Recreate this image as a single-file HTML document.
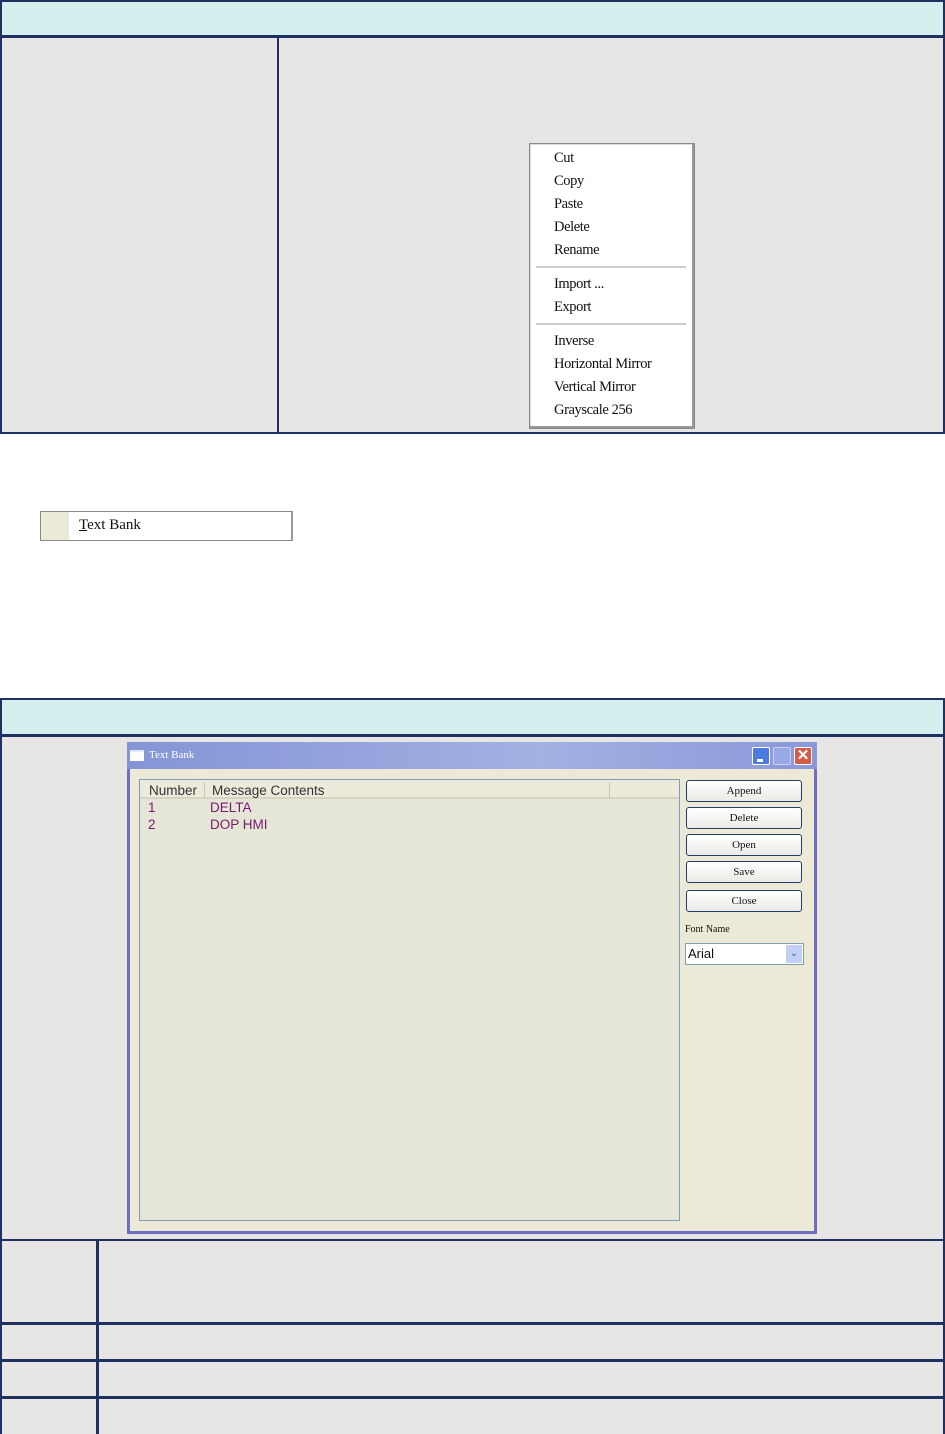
<!DOCTYPE html>
<html><head><style>
*{margin:0;padding:0;box-sizing:border-box}
body{width:945px;height:1434px;background:#fff;position:relative;overflow:hidden;font-family:"Liberation Serif",serif}
.a{position:absolute}
.nv{background:#1f3160}
.cy{background:#d3f0ef}
.gr{background:#e7e6e5}
.mi{position:absolute;left:24px;font-size:14.5px;color:#111;letter-spacing:-0.4px}
.btn{position:absolute;left:686px;width:116px;height:22px;border:1px solid #1f3f6a;border-radius:3px;background:linear-gradient(#fff,#ecebe6);font-size:11px;text-align:center;line-height:20px;color:#111}
.ls{font-family:"Liberation Sans",sans-serif}
</style></head><body>
<div class="a nv" style="left:0;top:0;width:945px;height:434px"></div>
<div class="a cy" style="left:2px;top:2px;width:941px;height:33px"></div>
<div class="a gr" style="left:2px;top:38px;width:275px;height:394px"></div>
<div class="a gr" style="left:279px;top:38px;width:664px;height:394px"></div>
<div class="a" style="left:529px;top:143px;width:166px;height:286px;background:#fff;border:1px solid #888;box-shadow:inset -2px -2px 0 #999,inset 1px 1px 0 #ddd">
 <div class="mi" style="top:6px">Cut</div>
 <div class="mi" style="top:29px">Copy</div>
 <div class="mi" style="top:52px">Paste</div>
 <div class="mi" style="top:75px">Delete</div>
 <div class="mi" style="top:98px">Rename</div>
 <div class="a" style="left:6px;top:122px;width:150px;height:2px;background:#ccc"></div>
 <div class="mi" style="top:132px">Import ...</div>
 <div class="mi" style="top:155px">Export</div>
 <div class="a" style="left:6px;top:179px;width:150px;height:2px;background:#ccc"></div>
 <div class="mi" style="top:189px">Inverse</div>
 <div class="mi" style="top:212px">Horizontal Mirror</div>
 <div class="mi" style="top:235px">Vertical Mirror</div>
 <div class="mi" style="top:258px">Grayscale 256</div>
</div>
<div class="a" style="left:40px;top:511px;width:253px;height:30px;border:1px solid #888;border-right:2px solid #999;background:#fff">
 <div class="a" style="left:0;top:0;width:28px;height:28px;background:#ecead8"></div>
 <div class="a" style="left:38px;top:5px;font-size:15px;color:#111"><u>T</u>ext Bank</div>
</div>
<div class="a nv" style="left:0;top:698px;width:945px;height:736px"></div>
<div class="a cy" style="left:2px;top:700px;width:941px;height:34px"></div>
<div class="a gr" style="left:2px;top:737px;width:941px;height:502px"></div>
<div class="a gr" style="left:2px;top:1241px;width:94px;height:81px"></div>
<div class="a gr" style="left:99px;top:1241px;width:844px;height:81px"></div>
<div class="a gr" style="left:2px;top:1325px;width:94px;height:34px"></div>
<div class="a gr" style="left:99px;top:1325px;width:844px;height:34px"></div>
<div class="a gr" style="left:2px;top:1362px;width:94px;height:34px"></div>
<div class="a gr" style="left:99px;top:1362px;width:844px;height:34px"></div>
<div class="a gr" style="left:2px;top:1399px;width:94px;height:35px"></div>
<div class="a gr" style="left:99px;top:1399px;width:844px;height:35px"></div>
<div class="a" style="left:127px;top:742px;width:690px;height:492px;background:#6d70c2"></div>
<div class="a" style="left:127px;top:742px;width:690px;height:27px;background:linear-gradient(90deg,#8495d6,#a3b0e3 60%,#8a98d8)"></div>
<div class="a" style="left:130px;top:750px;width:14px;height:11px;background:#fff;border-top:2px solid #dfe6ff"></div>
<div class="a" style="left:149px;top:749px;font-size:11px;color:#fff">Text Bank</div>
<div class="a" style="left:752px;top:747px;width:18px;height:18px;background:#4c7be0;border:1px solid #fff;border-radius:2px"><div class="a" style="left:4px;top:11px;width:6px;height:3px;background:#fff"></div></div>
<div class="a" style="left:773px;top:747px;width:18px;height:18px;background:#9aa8e6;border:1px solid #c8d0f4;border-radius:2px"></div>
<div class="a" style="left:794px;top:747px;width:18px;height:18px;background:#d45b4a;border:1px solid #fff;border-radius:2px;color:#fff;font:bold 15px 'Liberation Sans';text-align:center;line-height:16px">✕</div>
<div class="a" style="left:130px;top:769px;width:684px;height:462px;background:#ecead6"></div>
<div class="a" style="left:139px;top:779px;width:541px;height:442px;border:1px solid #7f9db9;background:#e5e5d8">
 <div class="a" style="left:0;top:0;width:539px;height:19px;background:#ebeadb;border-bottom:2px solid #d6d3c0"></div>
 <div class="a" style="left:64px;top:2px;width:1px;height:16px;background:#c9c7b5"></div>
 <div class="a" style="left:469px;top:2px;width:1px;height:16px;background:#c9c7b5"></div>
 <div class="a ls" style="left:9px;top:3px;font-size:13.5px;color:#333">Number</div>
 <div class="a ls" style="left:72px;top:3px;font-size:13.5px;color:#333">Message Contents</div>
 <div class="a ls" style="left:8px;top:20px;font-size:13.5px;color:#7a1a6a">1</div>
 <div class="a ls" style="left:70px;top:20px;font-size:13.5px;color:#7a1a6a">DELTA</div>
 <div class="a ls" style="left:8px;top:37px;font-size:13.5px;color:#7a1a6a">2</div>
 <div class="a ls" style="left:70px;top:37px;font-size:13.5px;color:#7a1a6a">DOP HMI</div>
</div>
<div class="btn" style="top:780px">Append</div>
<div class="btn" style="top:807px">Delete</div>
<div class="btn" style="top:834px">Open</div>
<div class="btn" style="top:861px">Save</div>
<div class="btn" style="top:890px">Close</div>
<div class="a" style="left:685px;top:924px;font-size:10px;color:#111">Font Name</div>
<div class="a" style="left:685px;top:943px;width:119px;height:22px;background:#fff;border:1px solid #7f9db9">
 <div class="a ls" style="left:2px;top:2px;font-size:13px;color:#111">Arial</div>
 <div class="a" style="left:100px;top:1px;width:16px;height:18px;background:#c1d0f4;color:#4d6185;font-size:10px;text-align:center;line-height:18px">&#8964;</div>
</div>
</body></html>
